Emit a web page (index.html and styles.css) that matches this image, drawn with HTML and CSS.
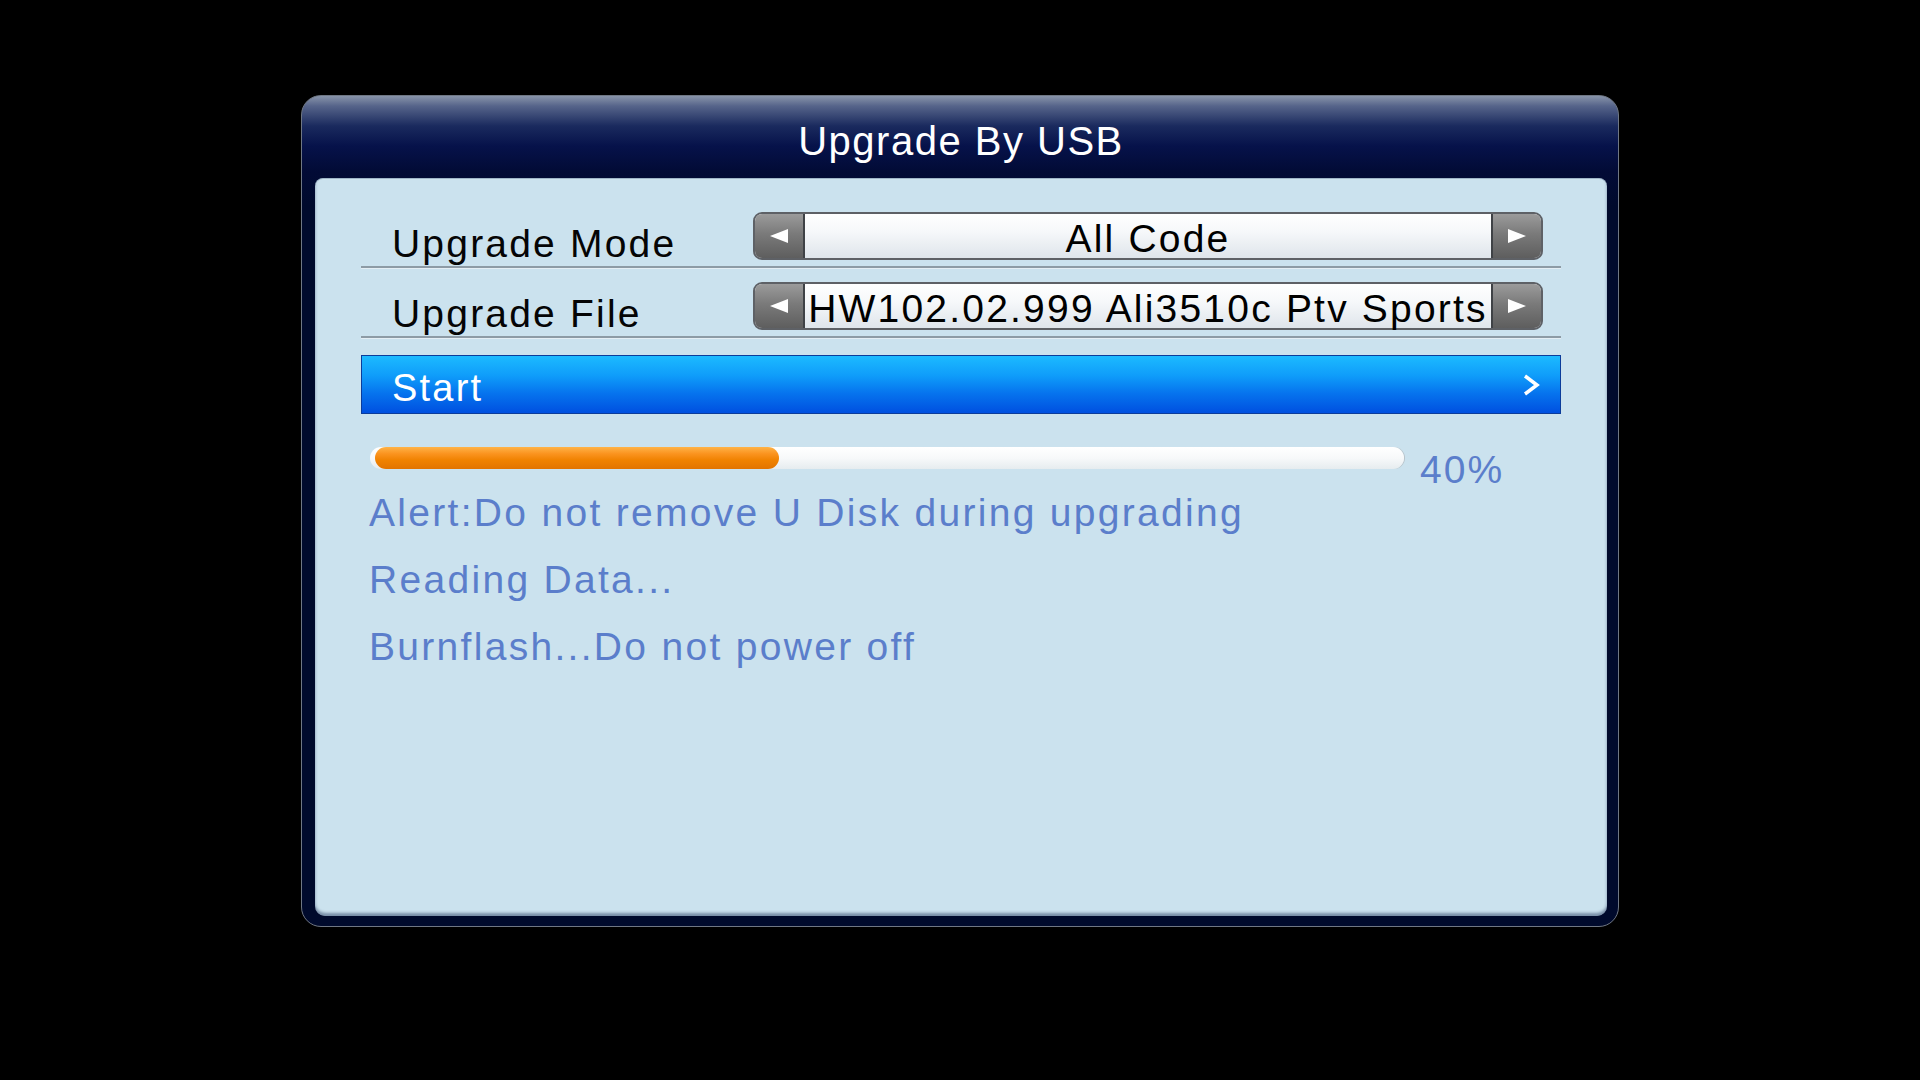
FILE: index.html
```html
<!DOCTYPE html>
<html>
<head>
<meta charset="utf-8">
<link rel="stylesheet" href="styles.css">
</head>
<body>
<div class="screen">
  <div class="panel">
    <div class="title">Upgrade By USB</div>
    <div class="content">
      <div class="row">
        <div class="label">Upgrade Mode</div>
        <div class="select">
          <div class="btn btn-left"><svg width="18" height="14" viewBox="0 0 18 14"><polygon points="0,7 18,0 18,14" fill="#ffffff"/></svg></div>
          <div class="value">All Code</div>
          <div class="btn btn-right"><svg width="18" height="14" viewBox="0 0 18 14"><polygon points="18,7 0,0 0,14" fill="#ffffff"/></svg></div>
        </div>
      </div>
      <div class="row">
        <div class="label">Upgrade File</div>
        <div class="select">
          <div class="btn btn-left"><svg width="18" height="14" viewBox="0 0 18 14"><polygon points="0,7 18,0 18,14" fill="#ffffff"/></svg></div>
          <div class="value">HW102.02.999 Ali3510c Ptv Sports</div>
          <div class="btn btn-right"><svg width="18" height="14" viewBox="0 0 18 14"><polygon points="18,7 0,0 0,14" fill="#ffffff"/></svg></div>
        </div>
      </div>
      <div class="start">
        <span class="start-text">Start</span>
        <svg class="chev" width="18" height="22" viewBox="0 0 18 22"><polyline points="3,2 15,11 3,20" fill="none" stroke="#ffffff" stroke-width="3.5" stroke-linejoin="miter"/></svg>
      </div>
      <div class="progress-row">
        <div class="track"><div class="fill" style="width:404px"></div></div>
        <div class="pct">40%</div>
      </div>
      <div class="messages">
        <div class="msg">Alert:Do not remove U Disk during upgrading</div>
        <div class="msg">Reading Data...</div>
        <div class="msg">Burnflash...Do not power off</div>
      </div>
    </div>
  </div>
</div>
</body>
</html>
```

FILE: styles.css
```css
html, body {
  margin: 0;
  padding: 0;
  background: #000000;
}
body {
  width: 1920px;
  height: 1080px;
  overflow: hidden;
  font-family: "Liberation Sans", Arial, sans-serif;
}
.screen {
  padding-top: 95px;
  display: flex;
  justify-content: center;
}
.panel {
  width: 1318px;
  height: 832px;
  box-sizing: border-box;
  border: 1px solid #6f7784;
  border-radius: 20px;
  padding: 0 11px 10px 13px;
  background: linear-gradient(to bottom, #8894aa 0px, #56648a 10px, #1a2a5e 30px, #06124a 50px, #020b36 75px, #000a2c 110px, #000a2c 100%);
  display: flex;
  flex-direction: column;
}
.title {
  height: 82px;
  box-sizing: border-box;
  padding-top: 8px;
  line-height: 74px;
  text-align: center;
  color: #ffffff;
  font-size: 40px;
  letter-spacing: 1.5px;
}
.content {
  flex: 1;
  background: #cbe2ee;
  border-radius: 8px 8px 10px 10px;
  border-top: 1px solid #9fb6c8;
  box-sizing: border-box;
  padding: 19px 46px 0 46px;
  box-shadow: inset 0 -3px 3px rgba(20, 40, 80, 0.45);
}
.row {
  height: 70px;
  box-sizing: border-box;
  padding-top: 14px;
  border-bottom: 2px solid #8d9ba5;
  box-shadow: 0 1px 0 #e4eef4;
  display: flex;
}
.label {
  width: 392px;
  box-sizing: border-box;
  padding-left: 31px;
  align-self: flex-end;
  margin-bottom: 3px;
  line-height: 39px;
  font-size: 39px;
  letter-spacing: 2.2px;
  color: #050505;
  white-space: nowrap;
}
.select {
  width: 790px;
  height: 48px;
  box-sizing: border-box;
  border: 2px solid #5e6166;
  border-radius: 9px;
  display: flex;
  background: linear-gradient(to bottom, #ffffff 0%, #f6f8fa 40%, #dfe5eb 100%);
}
.btn {
  width: 48px;
  flex: none;
  display: flex;
  align-items: center;
  justify-content: center;
  background: linear-gradient(to bottom, #9b9b9b 0%, #7a7a7a 45%, #5e5e5e 100%);
}
.btn-left {
  border-right: 2px solid #3f4246;
  border-radius: 7px 0 0 7px;
}
.btn-right {
  border-left: 2px solid #3f4246;
  border-radius: 0 7px 7px 0;
}
.value {
  flex: 1;
  min-width: 0;
  text-align: center;
  white-space: nowrap;
  font-size: 39px;
  letter-spacing: 2.2px;
  line-height: 44px;
  padding-top: 0;
  position: relative;
  top: 3px;
  height: 44px;
  color: #000000;
}
.start {
  margin-top: 17px;
  height: 59px;
  box-sizing: border-box;
  border: 1px solid #0c3c9a;
  background: linear-gradient(to bottom, #1cbaff 0%, #0f9cfa 35%, #0674ee 65%, #0050e0 100%);
  display: flex;
  align-items: center;
  justify-content: space-between;
  padding: 0 20px 0 30px;
}
.start-text {
  color: #ffffff;
  font-size: 38px;
  letter-spacing: 2.2px;
  line-height: 51px;
  padding-top: 8px;
  height: 59px;
  box-sizing: border-box;
}
.chev {
  display: block;
}
.progress-row {
  margin-top: 33px;
  display: flex;
  align-items: flex-start;
}
.track {
  margin-left: 9px;
  width: 1034px;
  height: 22px;
  border-radius: 11px;
  box-sizing: border-box;
  padding-left: 5px;
  background: linear-gradient(to bottom, #ffffff 0%, #f7f9fa 50%, #e6ecef 100%);
  box-shadow: 1px 0 0 #b9c3c9;
  overflow: hidden;
}
.fill {
  height: 22px;
  border-radius: 11px;
  background: linear-gradient(to bottom, #ffb347 0%, #fb9420 30%, #f08200 60%, #e27400 100%);
}
.pct {
  margin-left: 16px;
  margin-top: 8px;
  font-size: 39px;
  letter-spacing: 2px;
  line-height: 30px;
  color: #5b7ecb;
}
.messages {
  margin-top: 8px;
  padding-left: 8px;
  display: flex;
  flex-direction: column;
  gap: 27px;
}
.msg {
  font-size: 39px;
  letter-spacing: 2.3px;
  line-height: 40px;
  color: #5b7ecb;
  white-space: nowrap;
}
```
